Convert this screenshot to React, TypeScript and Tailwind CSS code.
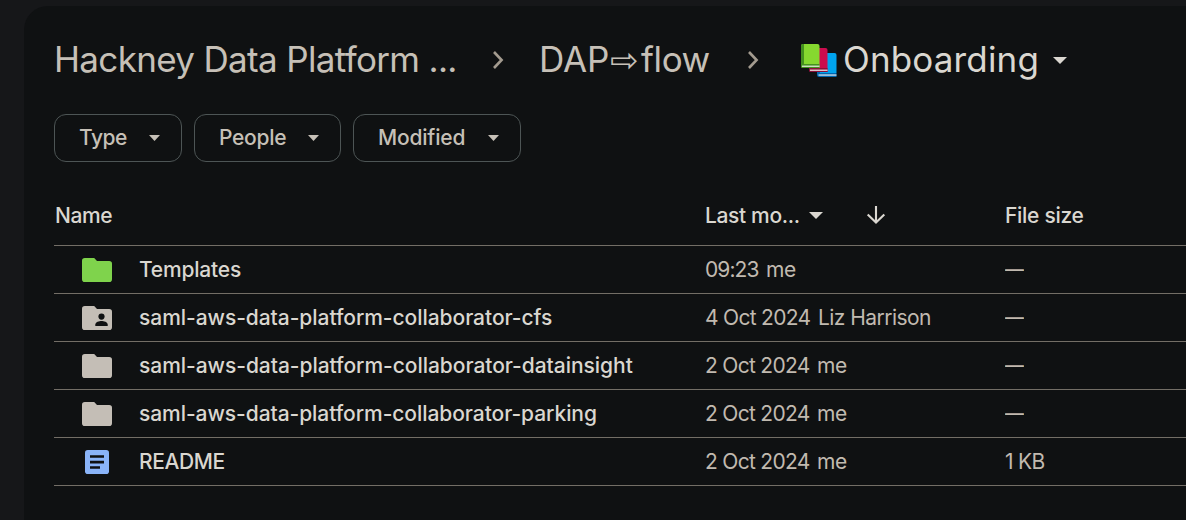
import type { ReactNode } from "react";

function Chevron() {
  return (
    <svg className="shrink-0" width="12" height="20" viewBox="0 0 12 20" fill="none">
      <path d="M2 2l7.6 8L2 18" stroke="#a39b8f" strokeWidth="2.6" />
    </svg>
  );
}

function Caret({ className, fill }: { className: string; fill: string }) {
  return (
    <svg className={className} viewBox="0 0 14 7" preserveAspectRatio="none">
      <path d="M0 0h14L7 7z" fill={fill} />
    </svg>
  );
}

function Books() {
  return (
    <svg className="shrink-0" width="36" height="33" viewBox="0 0 36 33">
      <path d="M17 9h16.5q2 0 2 2v18H17z" fill="#00a4ef" />
      <path d="M16 11q0-2 2-2h1v20h16.5v4H18q-2 0-2-2z" fill="#0067b0" />
      <path d="M17.5 30.4h18v1.3h-18z" fill="#d8e4ec" />
      <path d="M8 4h16.500q2 0 2 2v22H10q-2 0-2-2z" fill="#cb0c4e" />
      <path d="M8 24h18.500v4H10q-2 0-2-2z" fill="#8a0f38" />
      <path d="M9 25.600h17.500v1.300H9z" fill="#e8dadd" />
      <path d="M0 2q0-2 2-2h14.500q2 0 2 2v22H2q-2 0-2-2z" fill="#86d82f" />
      <path d="M0 2q0-2 2-2h1v20h15.500v4H2q-2 0-2-2z" fill="#44901f" />
      <path d="M1 21.600h17.500v1.300H1z" fill="#dce8d4" />
    </svg>
  );
}

function Folder({ color, shared = false }: { color: string; shared?: boolean }) {
  return (
    <svg width="30" height="24" viewBox="0 0 30 24">
      <path d="M2.8 0h9.4L15 3h12.2Q30 3 30 5.8v15.4Q30 24 27.2 24H2.8Q0 24 0 21.2V2.8Q0 0 2.8 0z" fill={color} />
      {shared && (
        <g fill="#0f1112">
          <circle cx="19.5" cy="10.6" r="3.1" />
          <path d="M13.3 20v-1.4c0-2.4 4-3.5 6.2-3.5s6.2 1.1 6.2 3.5V20z" />
        </g>
      )}
    </svg>
  );
}

function Doc() {
  return (
    <svg width="24" height="24" viewBox="0 0 24 24">
      <rect width="24" height="24" rx="2.8" fill="#8ab4f8" />
      <path d="M5 5.2h14v2.6H5zM5 10.8h14v2.6H5zM5 16.2h10v2.6H5z" fill="#0f1112" />
    </svg>
  );
}

function Chip({ label, className, textClass }: { label: string; className: string; textClass: string }) {
  return (
    <button className={`flex h-12 items-center justify-between rounded-xl border border-[#4d5555] pr-[21px] pl-6 font-medium text-[#c6c0b7] ${className}`}>
      <span className={textClass}>{label}</span>
      <Caret className="h-[6px] w-[11px]" fill="#c6c0b7" />
    </button>
  );
}

type RowProps = {
  icon: ReactNode;
  name: string;
  nameClass: string;
  date: string;
  dateClass: string;
  owner: string;
  ownerClass?: string;
  size: string;
};

function Row({ icon, name, nameClass, date, dateClass, owner, ownerClass = "tracking-[-0.5px]", size }: RowProps) {
  return (
    <div className="flex h-12 items-center border-b border-[#736e66] text-[#c1bab0]">
      <div className="flex w-[85px] justify-center">{icon}</div>
      <div className={`w-[566px] font-medium text-[#dad7d0] ${nameClass}`}>{name}</div>
      <div className="flex w-[299px]">
        <span className={dateClass}>{date}</span>
        <span className={ownerClass}>{owner}</span>
      </div>
      <div className="pl-[1px]">
        {size === "—" ? <span className="inline-block origin-left scale-x-90">—</span> : <span className="tracking-[-0.7px]">{size}</span>}
      </div>
    </div>
  );
}

export default function App() {
  return (
    <div className="h-[520px] w-[1186px] overflow-hidden bg-[#161719] pt-[6px] pl-6 font-['Inter',sans-serif] text-[21px] leading-7 whitespace-nowrap">
      <main className="h-full rounded-tl-3xl bg-[#0f1112] pl-[30px]">
        <nav className="flex h-[108px] items-center text-[35px] leading-10 text-[#c6c0b7]">
          <div className="w-[438px] pb-[2px] tracking-[-0.66px]">Hackney Data Platform ...</div>
          <Chevron />
          <div className="flex w-[243px] items-baseline pb-[2px] pl-[35px]">
            <span className="w-[71px] tracking-[-0.1px]">DAP</span>
            <span className="w-[31px] font-['DejaVu_Sans'] text-[34px] leading-10">⇨</span>
            <span className="tracking-[-0.4px]">flow</span>
          </div>
          <Chevron />
          <div className="flex items-center pl-[42px]">
            <Books />
            <span className="w-[216px] pb-[2px] pl-[6px] tracking-[0.15px] text-[#dad7d0]">Onboarding</span>
            <Caret className="h-[7px] w-[14px]" fill="#dad7d0" />
          </div>
        </nav>
        <div className="flex gap-3">
          <Chip label="Type" className="w-[128px]" textClass="tracking-[-0.5px]" />
          <Chip label="People" className="w-[147px]" textClass="tracking-[-0.3px]" />
          <Chip label="Modified" className="w-[168px]" textClass="tracking-[-0.2px]" />
        </div>
        <div className="mt-6 flex h-[60px] items-center border-b border-[#736e66] pl-px font-medium text-[#dad7d0]">
          <div className="w-[650px] tracking-[-0.4px]">Name</div>
          <div className="flex w-[300px] items-center">
            <span className="w-[104px] tracking-[-0.35px]">Last mo...</span>
            <Caret className="h-[7px] w-[14px]" fill="#dad7d0" />
            <svg className="mb-[2px] ml-[43px]" width="20" height="20" viewBox="0 0 20 20" fill="none" stroke="#dad7d0" strokeWidth="2.1">
              <path d="M10 1v16.5M1.700 9.400L10 17.600l8.300-8.200" />
            </svg>
          </div>
          <div className="tracking-[-0.3px]">File size</div>
        </div>
        <Row icon={<Folder color="#7fd34c" />} name="Templates" nameClass="tracking-[-0.2px]" date="09:23" dateClass="w-[61px] tracking-[-0.9px]" owner="me" size="—" />
        <Row icon={<Folder color="#c4beb6" shared />} name="saml-aws-data-platform-collaborator-cfs" nameClass="tracking-[-0.05px]" date="4 Oct 2024" dateClass="w-[113px] tracking-[-0.7px]" owner="Liz Harrison" ownerClass="tracking-[-0.55px]" size="—" />
        <Row icon={<Folder color="#c4beb6" />} name="saml-aws-data-platform-collaborator-datainsight" nameClass="tracking-[-0.04px]" date="2 Oct 2024" dateClass="w-[112px] tracking-[-0.7px]" owner="me" size="—" />
        <Row icon={<Folder color="#c4beb6" />} name="saml-aws-data-platform-collaborator-parking" nameClass="tracking-[-0.06px]" date="2 Oct 2024" dateClass="w-[112px] tracking-[-0.7px]" owner="me" size="—" />
        <Row icon={<Doc />} name="README" nameClass="tracking-[-0.4px]" date="2 Oct 2024" dateClass="w-[112px] tracking-[-0.7px]" owner="me" size="1 KB" />
      </main>
    </div>
  );
}
